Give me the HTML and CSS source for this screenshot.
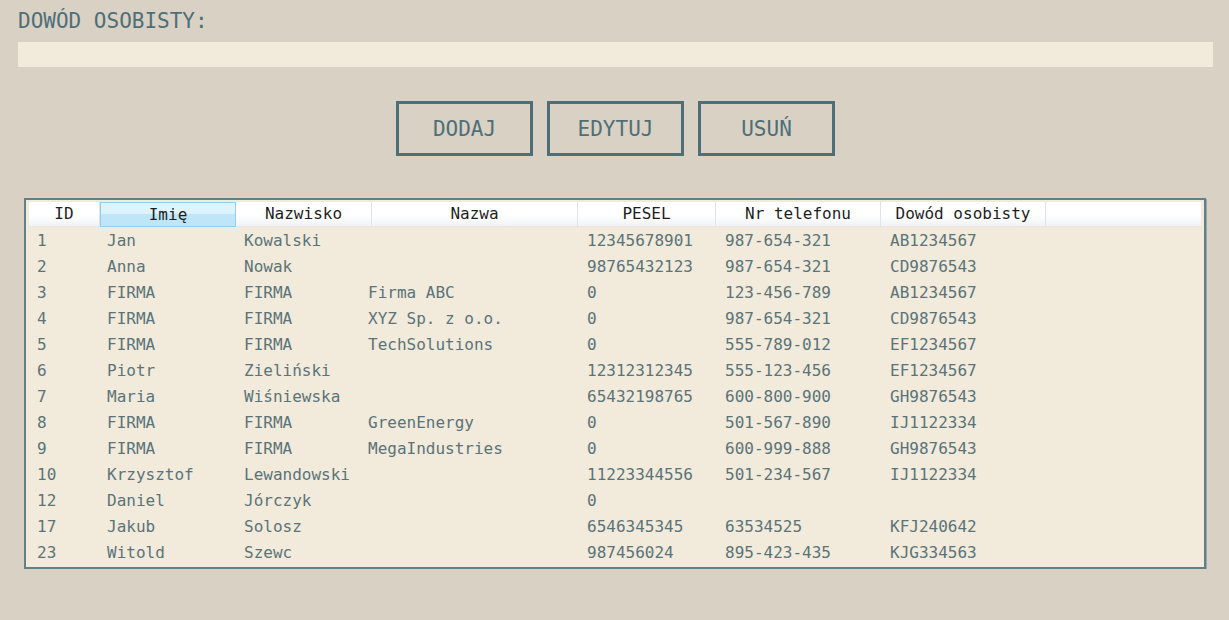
FILE: index.html
```html
<!DOCTYPE html>
<html lang="pl">
<head>
<meta charset="utf-8">
<title>Klienci</title>
<link rel="stylesheet" href="styles.css">
</head>
<body>
<div class="label">DOWÓD OSOBISTY:</div>
<div class="input"></div>
<div class="buttons">
  <button class="btn">DODAJ</button>
  <button class="btn">EDYTUJ</button>
  <button class="btn">USUŃ</button>
</div>
<div class="table">
  <div class="thead">
    <div class="th">ID</div>
    <div class="th sel">Imię</div>
    <div class="th">Nazwisko</div>
    <div class="th">Nazwa</div>
    <div class="th">PESEL</div>
    <div class="th">Nr telefonu</div>
    <div class="th">Dowód osobisty</div>
    <div class="th last"></div>
  </div>
  <div class="tbody">
    <div class="tr"><span>1</span><span>Jan</span><span>Kowalski</span><span></span><span>12345678901</span><span>987-654-321</span><span>AB1234567</span></div>
    <div class="tr"><span>2</span><span>Anna</span><span>Nowak</span><span></span><span>98765432123</span><span>987-654-321</span><span>CD9876543</span></div>
    <div class="tr"><span>3</span><span>FIRMA</span><span>FIRMA</span><span>Firma ABC</span><span>0</span><span>123-456-789</span><span>AB1234567</span></div>
    <div class="tr"><span>4</span><span>FIRMA</span><span>FIRMA</span><span>XYZ Sp. z o.o.</span><span>0</span><span>987-654-321</span><span>CD9876543</span></div>
    <div class="tr"><span>5</span><span>FIRMA</span><span>FIRMA</span><span>TechSolutions</span><span>0</span><span>555-789-012</span><span>EF1234567</span></div>
    <div class="tr"><span>6</span><span>Piotr</span><span>Zieliński</span><span></span><span>12312312345</span><span>555-123-456</span><span>EF1234567</span></div>
    <div class="tr"><span>7</span><span>Maria</span><span>Wiśniewska</span><span></span><span>65432198765</span><span>600-800-900</span><span>GH9876543</span></div>
    <div class="tr"><span>8</span><span>FIRMA</span><span>FIRMA</span><span>GreenEnergy</span><span>0</span><span>501-567-890</span><span>IJ1122334</span></div>
    <div class="tr"><span>9</span><span>FIRMA</span><span>FIRMA</span><span>MegaIndustries</span><span>0</span><span>600-999-888</span><span>GH9876543</span></div>
    <div class="tr"><span>10</span><span>Krzysztof</span><span>Lewandowski</span><span></span><span>11223344556</span><span>501-234-567</span><span>IJ1122334</span></div>
    <div class="tr"><span>12</span><span>Daniel</span><span>Jórczyk</span><span></span><span>0</span><span></span><span></span></div>
    <div class="tr"><span>17</span><span>Jakub</span><span>Solosz</span><span></span><span>6546345345</span><span>63534525</span><span>KFJ240642</span></div>
    <div class="tr"><span>23</span><span>Witold</span><span>Szewc</span><span></span><span>987456024</span><span>895-423-435</span><span>KJG334563</span></div>
  </div>
</div>
</body>
</html>
```
FILE: styles.css
```css
html, body {
  margin: 0;
  padding: 0;
}
body {
  background: #d9d1c4;
  padding: 8px 16px 0 18px;
  font-family: "DejaVu Sans Mono", "Liberation Mono", monospace;
}
.label {
  font-size: 21px;
  line-height: 26px;
  color: #4f6f78;
}
.input {
  margin-top: 8px;
  height: 25px;
  background: #f2eadb;
}
.buttons {
  display: flex;
  justify-content: center;
  gap: 14px;
  margin-top: 34px;
}
.btn {
  width: 137px;
  height: 55px;
  border: 3px solid #4f6f78;
  background: transparent;
  color: #4f6f78;
  font-family: "DejaVu Sans Mono", "Liberation Mono", monospace;
  font-size: 21px;
  padding: 0;
  margin: 0;
}
.table {
  margin: 42px 7px 0 6px;
  height: 371px;
  box-sizing: border-box;
  border: 2px solid #62808a;
  box-shadow: 1px 1px 0 #93a7ab;
  background: #f2eadb;
  padding: 2px 3px 0 3px;
}
.thead {
  display: grid;
  grid-template-columns: 71px 136px 136px 206px 138px 165px 165px 1fr;
  height: 25px;
}
.th {
  box-sizing: border-box;
  background: linear-gradient(#ffffff 0%, #ffffff 55%, #f1f2f4 100%);
  border-right: 1px solid #e2e2e2;
  border-bottom: 1px solid #e6e6e6;
  text-align: center;
  font-size: 16px;
  line-height: 24px;
  color: #1e1e1e;
}
.th.sel {
  background: linear-gradient(#def4fc 0%, #def4fc 45%, #bfe6f8 50%, #bfe6f8 100%);
  border: 1px solid #8fd0f0;
  line-height: 23px;
}
.th.last {
  border-right: none;
}
.tr {
  display: grid;
  grid-template-columns: 70px 137px 124px 219px 138px 165px 165px;
  height: 26px;
  align-items: center;
  font-size: 16px;
  color: #5a7479;
}
.tr span {
  padding-left: 8px;
  white-space: nowrap;
}
```
